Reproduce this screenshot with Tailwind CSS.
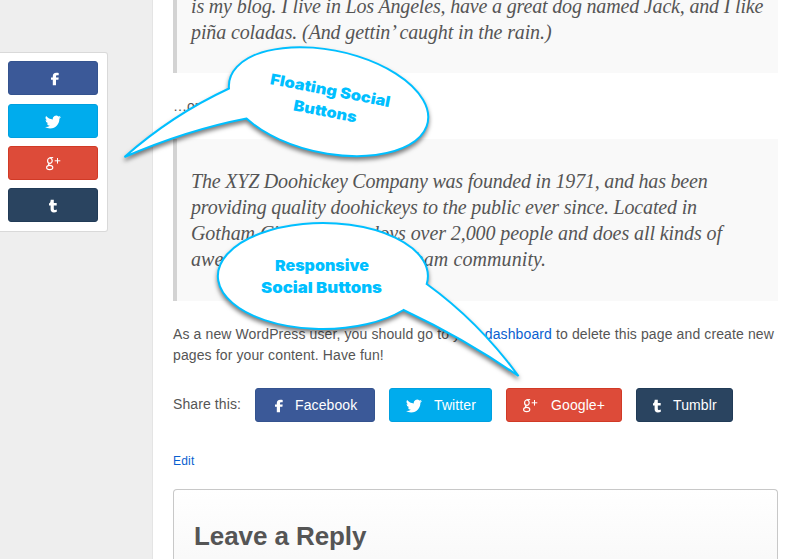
<!DOCTYPE html>
<html lang="en">
<head>
<meta charset="utf-8">
<title>Social Buttons</title>
<script src="https://cdn.jsdelivr.net/npm/@tailwindcss/browser@4"></script>
</head>
<body class="bg-[#eeeeee] font-['Liberation_Sans',Arial,sans-serif] text-[14px] leading-[21px] text-[#555]">
<svg class="hidden">
  <symbol id="fb" viewBox="0 0 16 16"><path d="M5.800 14.300V8.800H4V6.400h1.800V5.200C5.800 2.900 6.900 1.700 9.400 1.700c.9 0 1.600.1 2.300.2v2.300h-1.400c-1 0-1.300.4-1.300 1.300v.9h2.700l-.3 2.400H9v5.500z" fill="#fff"/></symbol>
  <symbol id="tw" viewBox="0 0 24 24"><path fill="#fff" d="M23.950 4.570a10 10 0 01-2.820.770 4.960 4.960 0 002.160-2.720c-.950.550-2 .950-3.130 1.180a4.920 4.920 0 00-8.380 4.480C7.690 8.090 4.070 6.130 1.640 3.160a4.920 4.920 0 001.520 6.570 4.900 4.900 0 01-2.230-.610v.060a4.920 4.920 0 003.950 4.830 5 5 0 01-2.210.080 4.940 4.940 0 004.600 3.420A9.870 9.870 0 010 19.540a13.990 13.990 0 007.550 2.210c9.050 0 14-7.500 14-13.980 0-.210 0-.420-.020-.630a9.940 9.940 0 002.460-2.550z"/></symbol>
  <symbol id="gp" viewBox="0 0 16 16"><g fill="none" stroke="#fff"><ellipse cx="4.900" cy="4.700" rx="2.300" ry="2.700" stroke-width="1.200"/><path d="M4.500 1.600H8.200M6.300 2.200L7.600 1.600" stroke-width="1"/><path d="M4 7.300C2.800 8.300 3.500 9 4.900 9.400" stroke-width="1.100"/><ellipse cx="4.700" cy="11.500" rx="3.100" ry="2.100" stroke-width="1.100"/><path d="M12.500 2v5.600M9.700 4.800h5.600" stroke-width="1"/></g></symbol>
  <symbol id="tb" viewBox="0 0 16 16"><path d="M5.700 1.800h3.100v3.200h2.900v2.500H8.800v2.900c0 1.200.5 1.500 1.300 1.500.7 0 1.200-.2 1.700-.4v2.300c-.8.400-1.700.6-2.900.6-2.300 0-3.300-1.200-3.300-3.100V7.500H4V5.400C5.200 5 5.600 3.800 5.700 1.800z" fill="#fff"/></symbol>
</svg>
<div class="relative flex h-[559px] w-[793px] overflow-hidden">
  <aside class="w-[152px] shrink-0 pt-[52px]">
    <div class="flex h-[180px] w-[108px] flex-col gap-2 rounded-r-[3px] border border-l-0 border-[#d9d9d9] bg-white pt-2 pl-2">
      <a class="mb-px flex h-[34px] w-[90px] items-center justify-center rounded-[3px] border border-[#34538f] bg-[#3b5998] pt-0.5 pl-1"><svg class="size-4"><use href="#fb"/></svg></a>
      <a class="flex h-[34px] w-[90px] items-center justify-center rounded-[3px] border border-[#00a0e0] bg-[#00aced] pt-0.5"><svg class="size-4"><use href="#tw"/></svg></a>
      <a class="flex h-[34px] w-[90px] items-center justify-center rounded-[3px] border border-[#d13a26] bg-[#dd4b39] pt-0.5"><svg class="size-4"><use href="#gp"/></svg></a>
      <a class="flex h-[34px] w-[90px] items-center justify-center rounded-[3px] border border-[#213b57] bg-[#2a4460] pt-0.5"><svg class="size-4"><use href="#tb"/></svg></a>
    </div>
  </aside>
  <main class="flex min-w-0 grow flex-col border-l border-[#e4e4e4] bg-white pr-[15px] pl-[20px]">
    <blockquote class="h-[73px] shrink-0 border-l-4 border-[#d3d3d3] bg-[#f9f9f9] pl-[14px] font-['Liberation_Serif',serif] text-[20px] leading-[26px] whitespace-nowrap italic">
      <div class="-mt-[7px] tracking-[-0.17px]">is my blog. I live in Los Angeles, have a great dog named Jack, and I like</div>
      <div class="tracking-[-0.12px]">piña coladas. (And gettin’ caught in the rain.)</div>
    </blockquote>
    <p class="mt-[23px] h-[43px]">…or something like this:</p>
    <blockquote class="h-[162px] shrink-0 border-l-4 border-[#d3d3d3] bg-[#f9f9f9] pt-[29px] pl-[14px] font-['Liberation_Serif',serif] text-[20px] leading-[26px] whitespace-nowrap italic">
      <div class="tracking-[-0.2px]">The XYZ Doohickey Company was founded in 1971, and has been</div>
      <div class="tracking-[-0.17px]">providing quality doohickeys to the public ever since. Located in</div>
      <div class="tracking-[-0.08px]">Gotham City, XYZ employs over 2,000 people and does all kinds of</div>
      <div class="tracking-[0.1px]">awesome things for the Gotham community.</div>
    </blockquote>
    <p class="mt-[23px] tracking-[0.115px] whitespace-nowrap">As a new WordPress user, you should go to your <a class="text-[#0a5fd0]">dashboard</a> to delete this page and create new<br>pages for your content. Have fun!</p>
    <div class="mt-[22px] flex h-[34px] shrink-0 items-center tracking-[0.1px] text-white">
      <span class="w-[82px] pb-[2px] text-[#555]">Share this:</span>
      <a class="mr-[14px] flex h-[34px] w-[120px] items-center rounded-[3px] border border-[#34538f] bg-[#3b5998] pl-[15px]"><svg class="mt-0.5 mr-2 size-4"><use href="#fb"/></svg>Facebook</a>
      <a class="mr-[14px] flex h-[34px] w-[103px] items-center rounded-[3px] border border-[#00a0e0] bg-[#00aced] pl-4"><svg class="mt-0.5 mr-3 size-4"><use href="#tw"/></svg>Twitter</a>
      <a class="mr-[14px] flex h-[34px] w-[116px] items-center rounded-[3px] border border-[#d13a26] bg-[#dd4b39] pl-[15px]"><svg class="mt-0.5 mr-[13px] size-4"><use href="#gp"/></svg>Google+</a>
      <a class="flex h-[34px] w-[97px] items-center rounded-[3px] border border-[#213b57] bg-[#2a4460] pl-3"><svg class="mt-0.5 mr-2 size-4"><use href="#tb"/></svg>Tumblr</a>
    </div>
    <a class="mt-[29px] text-[12px] tracking-[0.2px] text-[#0a5fd0]">Edit</a>
    <section class="mt-[17px] grow rounded-t-[4px] border border-b-0 border-[#c8c8c8] bg-linear-to-b from-white to-[#f9f9f9] pt-[30px] pl-[20px]">
      <h2 class="text-[26px] leading-[32px] font-bold tracking-[-0.08px]">Leave a Reply</h2>
    </section>
  </main>
  <svg class="absolute inset-0 h-[559px] w-[793px] drop-shadow-[0px_3px_2px_rgba(0,0,0,0.5)]" fill="#fff" stroke="#00bfff" stroke-width="2" stroke-linejoin="miter">
    <path d="M229 88.500A101.300 51.400 12 1 1 246.500 118.500Q187 130 124.500 157Q172 115 229 88.500Z"/>
    <path d="M426.700 284A105 53 0 1 0 403.500 310Q465 339 518.500 376Q478 321 426.700 284Z"/>
  </svg>
  <svg class="absolute inset-0 h-[559px] w-[793px] font-['Inter',sans-serif] text-[15px] font-black" fill="#00bfff" text-anchor="middle">
    <g transform="rotate(11 329 97)"><text x="329" y="95.500" textLength="122" lengthAdjust="spacingAndGlyphs">Floating Social</text><text x="328" y="117" textLength="64" lengthAdjust="spacingAndGlyphs">Buttons</text></g>
    <text x="322" y="271" textLength="94" lengthAdjust="spacingAndGlyphs">Responsive</text>
    <text x="321.500" y="293" textLength="121" lengthAdjust="spacingAndGlyphs">Social Buttons</text>
  </svg>
</div>
</body>
</html>
